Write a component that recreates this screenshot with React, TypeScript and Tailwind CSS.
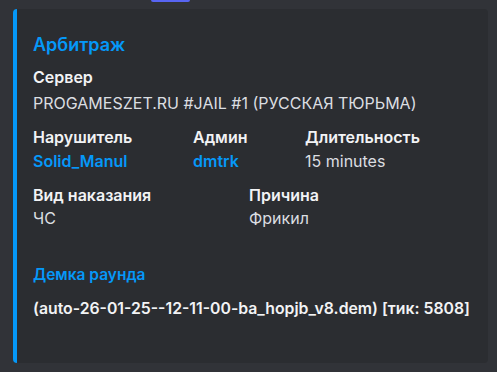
import React from "react";

type Field = { name: string; value: string; link?: boolean };

const row1: Field[] = [
  { name: "Нарушитель", value: "Solid_Manul", link: true },
  { name: "Админ", value: "dmtrk", link: true },
  { name: "Длительность", value: "15 minutes" },
];

const row2: Field[] = [
  { name: "Вид наказания", value: "ЧС" },
  { name: "Причина", value: "Фрикил" },
];

const FieldCell: React.FC<{ field: Field; gap: string }> = ({ field, gap }) => (
  <div>
    <div className="font-semibold text-[#f2f3f5] text-[16px] leading-[20px]">{field.name}</div>
    <div
      className={`${gap} text-[16px] leading-[20px] ${
        field.link ? "font-semibold text-[#0598f8]" : "text-[#dbdee1]"
      }`}
    >
      {field.value}
    </div>
  </div>
);

const App: React.FC = () => {
  return (
    <div
      className="w-[497px] h-[372px] bg-[#313338] overflow-hidden"
      style={{ fontFamily: 'Inter, "Noto Sans", sans-serif' }}
    >
      <div className="h-[9px]">
        <div className="ml-[151px] w-[39px] h-[2px] rounded-b-[2px] bg-[#5865f2]" />
      </div>

      <div className="ml-[13px] w-[475px] h-[354px] bg-[#2b2d31] rounded-[4px] border-l-4 border-[#0598f8] pl-4 pt-[25px]">
        <div className="font-semibold text-[18px] leading-[22px] text-[#0598f8]">Арбитраж</div>

        <div className="mt-[11px] font-semibold text-[#f2f3f5] text-[16px] leading-[20px]">Сервер</div>
        <div className="mt-[6px] text-[#dbdee1] text-[16px] leading-[20px]">
          PROGAMESZET.RU #JAIL #1 (РУССКАЯ ТЮРЬМА)
        </div>

        <div className="mt-[14px] grid grid-cols-[160px_112px_1fr]">
          {row1.map((f) => (
            <FieldCell key={f.name} field={f} gap="mt-[4px]" />
          ))}
        </div>

        <div className="mt-[14px] grid grid-cols-[216px_1fr]">
          {row2.map((f) => (
            <FieldCell key={f.name} field={f} gap="mt-[3px]" />
          ))}
        </div>

        <div className="mt-[36px] font-semibold text-[15.5px] leading-[22px] text-[#0598f8]">Демка раунда</div>
        <div className="mt-[13px] font-semibold text-[15.8px] leading-[20px] text-[#f2f3f5]">
          (auto-26-01-25--12-11-00-ba_hopjb_v8.dem) [тик: 5808]
        </div>
      </div>
    </div>
  );
};

export default App;
